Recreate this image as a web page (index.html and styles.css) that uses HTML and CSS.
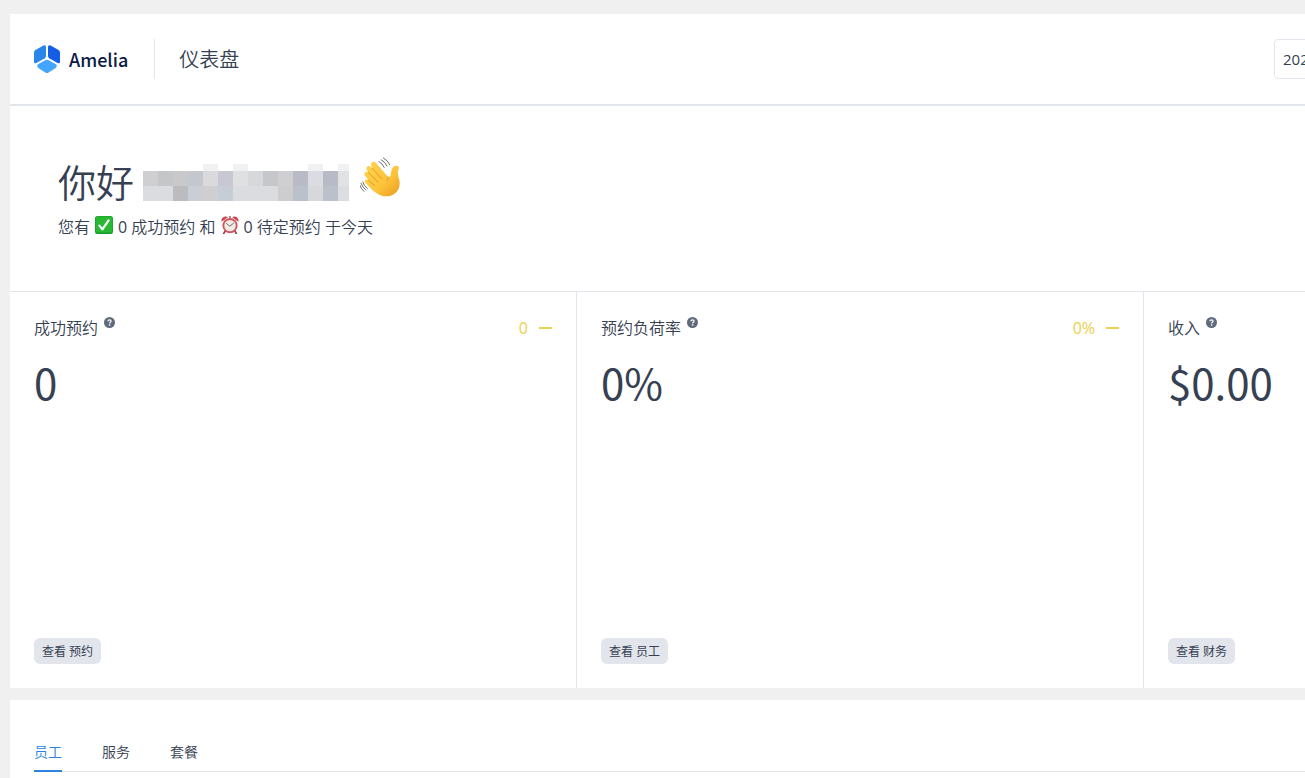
FILE: index.html
```html
<!DOCTYPE html>
<html lang="zh-CN">
<head>
    <meta charset="UTF-8">
    <meta name="viewport" content="width=device-width, initial-scale=1.0">
    <title>Amelia - 仪表盘</title>
    <link rel="stylesheet" href="styles.css">
</head>
<body>

    <!-- Shared icons -->
    <svg class="icon-defs" aria-hidden="true">
        <symbol id="icon-help" viewBox="0 0 11 11">
            <circle cx="5.5" cy="5.5" r="5.5" fill="#5f6b7c"/>
            <path d="M3.9 4.3C4 2.5 7.1 2.5 7.1 4.3C7.1 5.3 5.6 5.3 5.6 6.5" fill="none" stroke="#fff" stroke-width="1.2"/>
            <rect x="4.9" y="7.3" width="1.4" height="1.4" fill="#fff"/>
        </symbol>
    </svg>

    <div class="dashboard">

        <main class="panel">
            <!-- Header -->
            <header class="header">
                <div class="logo">
                    <svg class="logo-mark" viewBox="0 0 26 29" aria-hidden="true">
                        <path d="M9.4.6Q12 -.4 12 2V11Q12 12.6 10.8 13.3L2.4 18Q0 19 0 16.8V7.6Q0 5.8 1.4 5Z" fill="#2a85e8"/>
                        <path d="M16.6.6Q14 -.4 14 2V11Q14 12.6 15.2 13.3L23.6 18Q26 19 26 16.8V7.6Q26 5.8 24.6 5Z" fill="#145ee6"/>
                        <path d="M11.8 15.1Q13 14.4 14.2 15.1L22 19.2Q23.6 20.2 22.4 21.8Q22 22.8 21 23.5L14.6 27.6Q13 28.6 11.4 27.6L5 23.5Q4 22.8 3.6 21.8Q2.4 20.2 4 19.2Z" fill="#43a5fd"/>
                    </svg>
                    <span class="logo-name">Amelia</span>
                </div>
                <h1 class="page-title">仪表盘</h1>
                <input class="date-range" type="text" value="202" aria-label="日期范围">
            </header>

            <!-- Greeting -->
            <section class="greeting">
                <h2 class="greeting-title">
                    <span>你好</span>
                    <svg class="masked-name" viewBox="0 0 206 37" shape-rendering="crispEdges" role="img" aria-label="隐藏的用户名">
                        <path d="M60 0h15v7H60zM90 0h15v7H90zM165 0h15v7h-15zM195 0h11v7h-11z" fill="#f1f1f3"/>
                        <path d="M0 7h15v15H0z" fill="#cfcfd1"/>
                        <path d="M15 7h15v15H15z" fill="#c5c6c8"/>
                        <path d="M30 7h15v15H30z" fill="#c9c9cb"/>
                        <path d="M45 7h15v15H45z" fill="#c4c7cd"/>
                        <path d="M60 7h15v15H60z" fill="#dadadd"/>
                        <path d="M75 7h15v15H75z" fill="#c8c8d3"/>
                        <path d="M90 7h15v15H90z" fill="#dfe0e2"/>
                        <path d="M105 7h15v15h-15z" fill="#d7d8da"/>
                        <path d="M120 7h15v15h-15z" fill="#c6c7ca"/>
                        <path d="M135 7h15v15h-15z" fill="#cfcfd1"/>
                        <path d="M150 7h15v15h-15zM180 7h15v15h-15z" fill="#b8bbc6"/>
                        <path d="M165 7h15v15h-15z" fill="#dbdce2"/>
                        <path d="M195 7h11v15h-11z" fill="#e1e2e4"/>
                        <path d="M0 22h30v15H0z" fill="#dbdce0"/>
                        <path d="M30 22h15v15H30z" fill="#bbbbc0"/>
                        <path d="M45 22h15v15H45z" fill="#cbced4"/>
                        <path d="M60 22h15v15H60z" fill="#cfcfd2"/>
                        <path d="M75 22h15v15H75z" fill="#c6cdd5"/>
                        <path d="M90 22h45v15H90z" fill="#dbdce0"/>
                        <path d="M135 22h15v15h-15z" fill="#cdcdd0"/>
                        <path d="M150 22h15v15h-15zM180 22h15v15h-15z" fill="#bbc1cb"/>
                        <path d="M165 22h15v15h-15z" fill="#d7d8dc"/>
                        <path d="M195 22h11v15h-11z" fill="#dcdde2"/>
                    </svg>
                    <svg class="wave" viewBox="0 0 40 40" aria-hidden="true">
                        <defs>
                            <linearGradient id="hand" x1="0" y1="0" x2="1" y2="1">
                                <stop offset="0" stop-color="#ffd44f"/>
                                <stop offset=".6" stop-color="#fdc33a"/>
                                <stop offset="1" stop-color="#e99a1c"/>
                            </linearGradient>
                        </defs>
                        <path d="M12.5 33.2L5.7 26.2C3.6 23.8 6.2 21.2 8.6 23.3L5 18.7C3 16 6.1 13.2 8.4 15.6L7 13.2C5 10.2 8.4 7.4 10.9 10L12.1 11.4L11.2 8.4C10.5 5 14 3.5 16.2 6.3L28 19.8C29.5 20.5 30.4 19.4 30.7 17.5C31.2 14.4 31.8 10.6 34 9.4C37.3 7.8 39.6 9.4 38.5 12.6C37.3 16 38 18.5 39.2 22.8C40.5 28 39 33 34.8 36.4C29.5 40.6 22.6 39.9 17.8 37Z" fill="url(#hand)"/>
                        <path d="M8.6 23.3L14.6 28.6M8.4 15.6L18 25M12.1 11.4L21.6 21.6M28 19.8C29 21.4 27.6 22.4 27 24" fill="none" stroke="#e09a2a" stroke-width="1" stroke-linecap="round"/>
                        <path d="M19 4.6Q22.4 6.4 24.2 10.4M21.2 2.8Q25 4.6 27 9M23.4 1Q27.8 3.2 29.8 7.8M1 26.2Q2.2 30.4 5.8 33M2.8 25Q4 29.2 7.4 31.6M0 28.6Q1 32 4 34.4" fill="none" stroke="#6b6f73" stroke-width="1" stroke-linecap="round"/>
                    </svg>
                </h2>
                <p class="greeting-text">
                    <span>您有</span>
                    <svg class="emoji" viewBox="0 0 18 18" aria-hidden="true">
                        <rect width="18" height="18" rx="2.5" fill="#1c9a28"/>
                        <rect x=".6" y=".6" width="16.8" height="16" rx="2" fill="#28b834"/>
                        <path d="M4.4 9.6L7.4 13.4L13.6 4.4" fill="none" stroke="#fff" stroke-width="2.2" stroke-linecap="round" stroke-linejoin="round"/>
                    </svg>
                    <span><span class="count">0</span> 成功预约 和</span>
                    <svg class="emoji" viewBox="0 0 18 18" aria-hidden="true">
                        <path d="M4.2 15L2.8 17.4M13.8 15L15.2 17.4" stroke="#8b3a40" stroke-width="1.6" stroke-linecap="round"/>
                        <path d="M.6 5.8C-.4 2.4 3.4-.8 6.8 1.2ZM17.4 5.8C18.4 2.4 14.6-.8 11.2 1.2Z" fill="#c9434e"/>
                        <path d="M8 0h2v2.4H8z" fill="#b98a8c"/>
                        <circle cx="9" cy="9.6" r="7.6" fill="#cf5660"/>
                        <circle cx="9" cy="9.6" r="5.7" fill="#f0ece4"/>
                        <path d="M5.4 7.4L8.8 10.2L12.8 7" fill="none" stroke="#6b6d70" stroke-width="1"/>
                    </svg>
                    <span><span class="count">0</span> 待定预约 于今天</span>
                </p>
            </section>

            <!-- Statistics -->
            <section class="stats">
                <article class="stat">
                    <div class="stat-head">
                        <h3 class="stat-title">成功预约</h3>
                        <svg class="help"><use href="#icon-help"/></svg>
                        <span class="stat-change">0</span>
                    </div>
                    <p class="stat-value">0</p>
                    <button class="stat-btn" type="button">查看 预约</button>
                </article>
                <article class="stat">
                    <div class="stat-head">
                        <h3 class="stat-title">预约负荷率</h3>
                        <svg class="help"><use href="#icon-help"/></svg>
                        <span class="stat-change">0%</span>
                    </div>
                    <p class="stat-value">0%</p>
                    <button class="stat-btn" type="button">查看 员工</button>
                </article>
                <article class="stat">
                    <div class="stat-head">
                        <h3 class="stat-title">收入</h3>
                        <svg class="help"><use href="#icon-help"/></svg>
                    </div>
                    <p class="stat-value">$0.00</p>
                    <button class="stat-btn" type="button">查看 财务</button>
                </article>
            </section>
        </main>

        <!-- Tabs -->
        <section class="panel tabs-panel">
            <nav class="tabs">
                <a class="tab active" href="#employees">员工</a>
                <a class="tab" href="#services">服务</a>
                <a class="tab" href="#packages">套餐</a>
            </nav>
        </section>

    </div>

</body>
</html>
```

FILE: styles.css
```css
/* General Styles */
* {
    box-sizing: border-box;
}

body {
    margin: 0;
    height: 100vh;
    overflow: hidden;
    background: #f0f0f0;
    color: #354052;
    font-family: "Open Sans", "Noto Sans CJK SC", sans-serif;
    font-size: 16px;
    font-weight: 350;
    line-height: 24px;
}

h1, h2, h3, p {
    margin: 0;
    font-weight: 350;
}

.icon-defs {
    display: none;
}

.dashboard {
    display: flex;
    flex-direction: column;
    gap: 12px;
    min-width: 1711px;
    min-height: 100vh;
    padding: 14px 0 0 10px;
}

.panel {
    background: #fff;
}

/* Header */
.header {
    display: flex;
    align-items: center;
    height: 92px;
    padding: 0 24px;
    border-bottom: 2px solid #e2e6ec;
}

.logo {
    display: flex;
    align-items: center;
    gap: 9px;
    height: 40px;
    padding-right: 26px;
    border-right: 1px solid #e2e6ec;
}

.logo-mark {
    width: 26px;
    height: 29px;
}

.logo-name {
    color: #0b1b45;
    font-family: "Noto Sans CJK SC", sans-serif;
    font-size: 18px;
    font-weight: 500;
}

.page-title {
    padding: 2px 0 0 24px;
    font-size: 20px;
}

.date-range {
    width: 413px;
    height: 40px;
    margin-left: auto;
    padding: 0 8px;
    border: 1px solid #e2e6ec;
    border-radius: 4px;
    color: #354052;
    font-family: inherit;
    font-size: 15px;
}

/* Greeting */
.greeting {
    height: 185px;
    padding: 48px;
}

.greeting-title {
    display: flex;
    align-items: center;
    gap: 9px;
    font-size: 38px;
    line-height: 56px;
}

.masked-name {
    width: 206px;
    height: 37px;
}

.wave {
    width: 40px;
    height: 40px;
    margin: 0 0 10px 2px;
}

.greeting-text {
    display: flex;
    align-items: center;
    gap: 5px;
    padding-top: 5px;
}

.emoji {
    width: 18px;
    height: 18px;
    margin-bottom: 4px;
}

.count {
    font-weight: 400;
}

/* Statistics */
.stats {
    display: grid;
    grid-template-columns: repeat(3, 1fr);
    border-top: 1px solid #e2e6ec;
}

.stat {
    display: flex;
    flex-direction: column;
    align-items: flex-start;
    min-height: 396px;
    padding: 24px;
    border-right: 1px solid #e2e6ec;
}

.stat-head {
    display: flex;
    align-items: center;
    gap: 6px;
    width: 100%;
}

.stat-title {
    font-size: 16px;
}

.help {
    width: 11px;
    height: 11px;
    margin-bottom: 11px;
}

.stat-change {
    display: flex;
    align-items: center;
    gap: 11px;
    margin-left: auto;
    color: #ebcf4c;
    font-weight: 400;
}

.stat-change::after {
    content: "";
    width: 13px;
    height: 2px;
    background: #ebd15a;
}

.stat-value {
    padding-top: 10px;
    font-family: "Noto Sans CJK SC", sans-serif;
    font-size: 42px;
    font-weight: 400;
    line-height: 64px;
}

.stat-btn {
    height: 26px;
    margin-top: auto;
    padding: 0 8px;
    border: none;
    border-radius: 6px;
    background: #e2e6ec;
    color: #354052;
    font-family: inherit;
    font-size: 12px;
    cursor: pointer;
}

/* Tabs */
.tabs-panel {
    flex: 1;
    padding: 32px 24px;
}

.tabs {
    display: flex;
    gap: 40px;
    height: 40px;
    border-bottom: 1px solid #e2e6ec;
}

.tab {
    height: 40px;
    color: #354052;
    font-size: 14px;
    line-height: 40px;
    text-decoration: none;
}

.tab.active {
    border-bottom: 2px solid #2a84dd;
    color: #2a84dd;
}
```
